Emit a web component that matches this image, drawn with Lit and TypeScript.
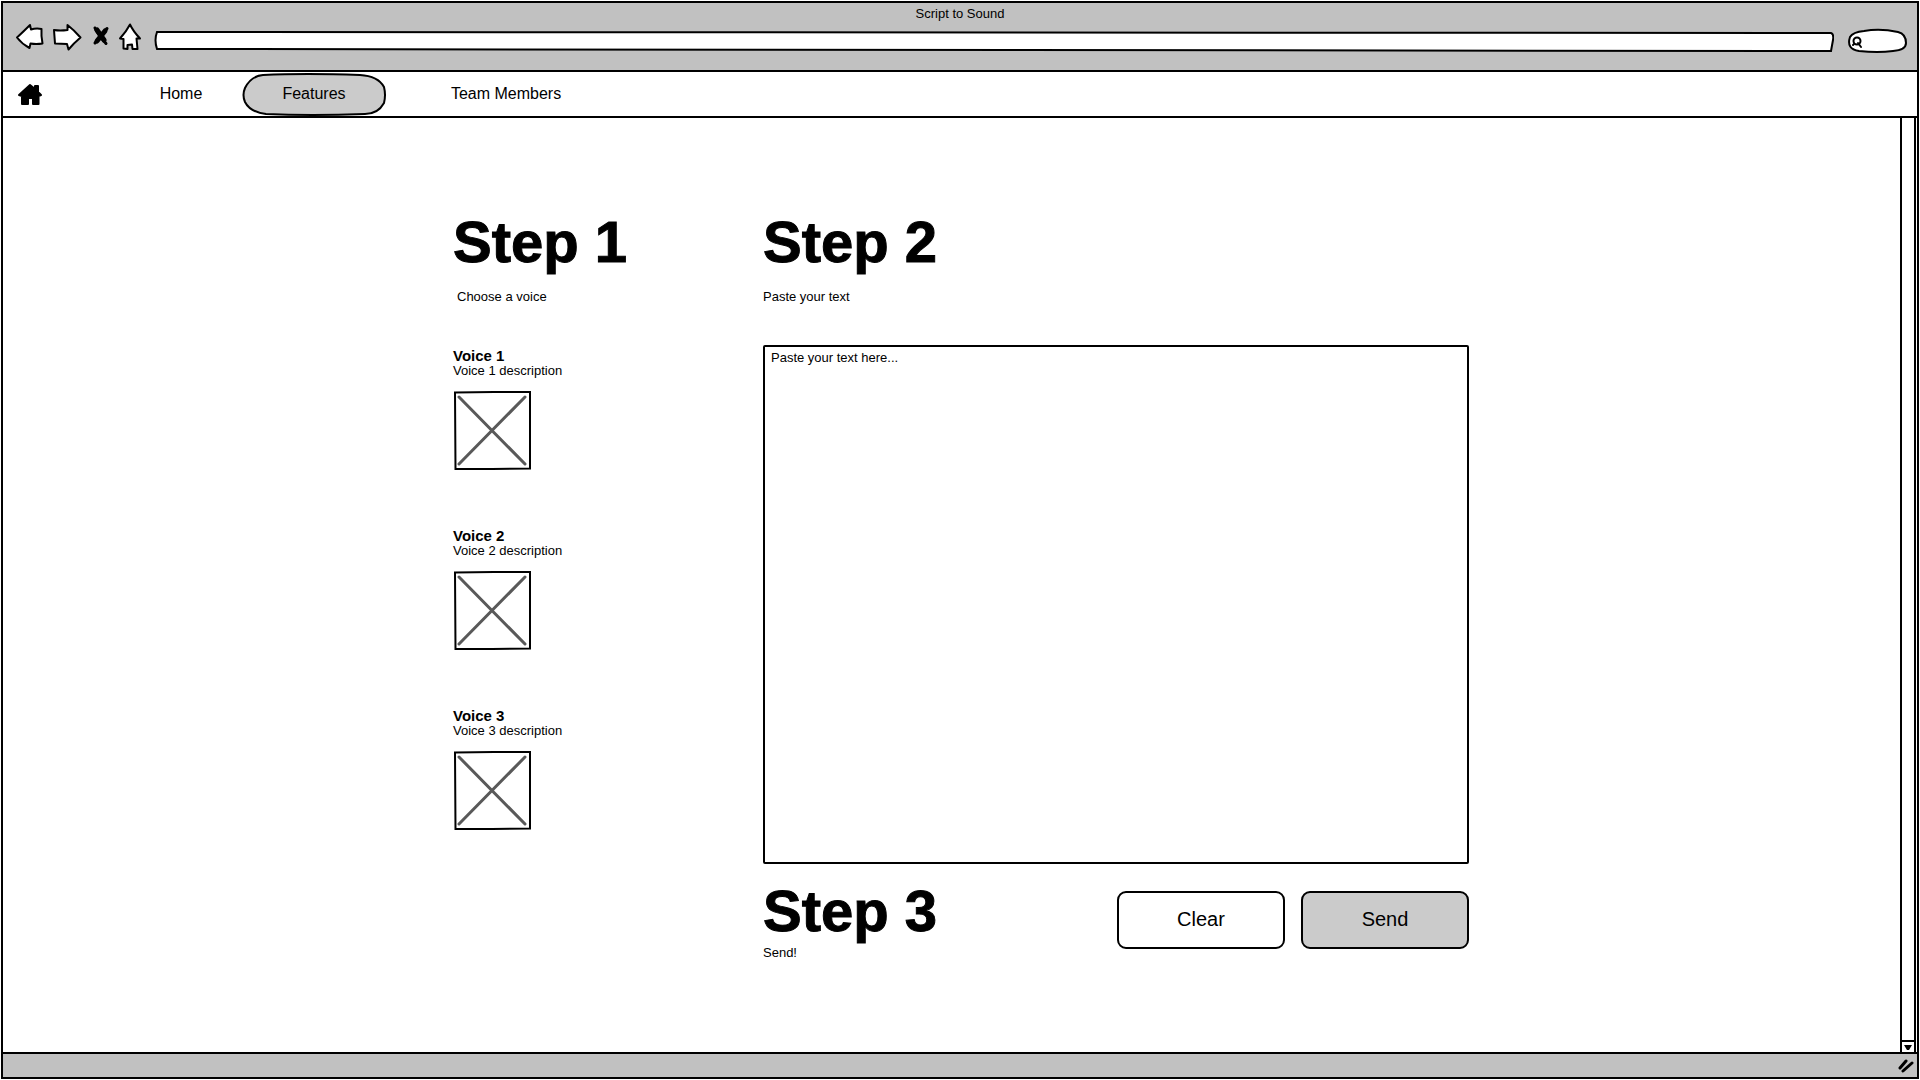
import { LitElement, html, css, svg } from "lit";
import { customElement, state } from "lit/decorators.js";

interface Voice {
  name: string;
  description: string;
}

const VOICES: Voice[] = [
  { name: "Voice 1", description: "Voice 1 description" },
  { name: "Voice 2", description: "Voice 2 description" },
  { name: "Voice 3", description: "Voice 3 description" },
];

@customElement("browser-toolbar")
export class BrowserToolbar extends LitElement {
  static styles = css`
    :host {
      display: block;
      background: #c1c1c1;
      border: 2px solid #000;
      font: 13px/16px "Liberation Sans", Arial, sans-serif;
    }
    .title {
      padding-top: 3px;
      text-align: center;
    }
    .bar {
      display: flex;
      align-items: flex-start;
      gap: 8px;
      height: 48px;
      padding: 0 8px 0 11px;
    }
    button {
      display: block;
      flex: none;
      margin: 0;
      padding: 0;
      border: 0;
      background: none;
    }
    svg {
      display: block;
    }
    .field {
      position: relative;
      display: flex;
      height: 22px;
      margin-top: 8px;
    }
    .address {
      flex: 1;
      margin-left: 4px;
    }
    .search {
      width: 62px;
      height: 26px;
      margin: 6px 0 0 5px;
    }
    .outline {
      position: absolute;
      inset: 0;
      width: 100%;
      height: 100%;
    }
    input {
      position: relative;
      flex: 1;
      min-width: 0;
      margin: 0;
      padding: 0 8px;
      border: 0;
      outline: 0;
      background: transparent;
      font: inherit;
    }
    .search input {
      padding-left: 20px;
    }
  `;

  private icon(width: number, x: number, label: string, shape: unknown) {
    return html`<button type="button" aria-label=${label}>
      <svg width=${width} height="30" viewBox="${x} 22 ${width} 30" stroke="#000" stroke-width="2"
        stroke-linejoin="round" stroke-linecap="round" fill="#fff">${shape}</svg>
    </button>`;
  }

  render() {
    return html`
      <div class="title">Script to Sound</div>
      <div class="bar">
        ${this.icon(30, 14, "Back", svg`<path d="M17 37.5 Q24 31 30 25 L31 29.5 Q36 28 41.5 29 Q41 36 42.5 43.5 Q36 44.5 30.5 43.5 L29.5 48 Q22 44 17 37.5Z"/>`)}
        ${this.icon(30, 52, "Forward", svg`<path d="M54 30 Q60 31 67.5 30 L67.5 25 Q74 30 80.5 37.5 Q74 43 68.5 49.5 L67 44 Q61 43.5 55 43.5 Q54.5 37 54 30Z"/>`)}
        ${this.icon(20, 91, "Stop", svg`<path d="M96 28 Q98 33 107 43.5 M108 28.5 Q103 35 96 43" fill="none" stroke-width="3"/><path d="M98 30 L105 40 M106 31 L98 41" stroke-width="5"/>`)}
        ${this.icon(24, 118, "Home", svg`<path d="M130 24.5 Q133 31 140 38.5 L136.5 38.5 L137.5 49 L132.5 49 L132 44.5 L127.5 45 L127.5 49 L123.5 48.5 L123.5 39 L120 38.5 Q126 32 130 24.5Z"/>`)}
        <div class="field address">
          <svg class="outline" viewBox="0 0 1678 22" preserveAspectRatio="none">
            <path d="M3 2 L1675 3 Q1678 4 1677 10 L1675 21 Q800 20 3 19 Q0 10 3 2Z" fill="#fff" stroke="#000" stroke-width="2" vector-effect="non-scaling-stroke"/>
          </svg>
          <input type="text" aria-label="Address" />
        </div>
        <div class="field search">
          <svg class="outline" viewBox="1847 28 62 26">
            <path d="M1850 37 Q1853 32 1864 31 Q1880 28 1898 32 Q1906 34 1906 43 Q1906 50 1893 51 Q1878 53 1859 51 Q1846 49 1850 37Z" fill="#fff" stroke="#000" stroke-width="2"/>
            <circle cx="1857" cy="41" r="3.5" fill="none" stroke="#000" stroke-width="2"/>
            <path d="M1854 44 L1853 45 M1858 43 L1861 47" stroke="#000" stroke-width="2" stroke-linecap="round"/>
          </svg>
          <input type="text" aria-label="Search" />
        </div>
      </div>
    `;
  }
}

@customElement("site-nav")
export class SiteNav extends LitElement {
  static styles = css`
    :host {
      display: block;
      border: solid #000;
      border-width: 0 2px 2px;
      font: 16px/44px "Liberation Sans", Arial, sans-serif;
    }
    nav {
      display: flex;
      align-items: center;
      height: 44px;
      padding-left: 14px;
    }
    a {
      color: #000;
      text-decoration: none;
    }
    svg {
      display: block;
    }
    .logo {
      width: 28px;
      margin-right: 98px;
    }
    .tab {
      position: relative;
      width: 76px;
      text-align: center;
    }
    .current {
      width: 144px;
      margin: 0 48px 0 23px;
    }
    .wide {
      width: 144px;
    }
    .pill {
      position: absolute;
      inset: 0;
      width: 100%;
      height: 100%;
    }
    .label {
      position: relative;
    }
  `;

  render() {
    return html`
      <nav>
        <a class="logo" href="#" aria-label="Start">
          <svg width="28" height="28" viewBox="17 80 28 28" stroke="#000" stroke-width="2" stroke-linejoin="round">
            <path d="M19 95 L30 85 L35 89 L35 86 L38 86 L38 92 L41 95 L38.5 96 L38.5 104 L33 104 L33 98 L28 98 L28 104 L22 104 L22 96Z"/>
          </svg>
        </a>
        <a class="tab" href="#home">Home</a>
        <a class="tab current" href="#features" aria-current="page">
          <svg class="pill" viewBox="242 72 144 44">
            <path d="M263 75 Q305 73 360 75 Q378 76 384 87 Q386 95 384 103 Q378 114 365 114 Q310 116 266 114 Q250 112 245 102 Q242 95 245 88 Q251 76 263 75Z" fill="#cbcbcb" stroke="#000" stroke-width="2"/>
          </svg>
          <span class="label">Features</span>
        </a>
        <a class="tab wide" href="#team">Team Members</a>
      </nav>
    `;
  }
}

@customElement("voice-card")
export class VoiceCard extends LitElement {
  static properties = { voice: { attribute: false } };
  declare voice: Voice;

  static styles = css`
    :host {
      display: block;
      font: 13px/16px "Liberation Sans", Arial, sans-serif;
    }
    h2 {
      margin: 0;
      font-size: 15px;
      line-height: 15px;
    }
    p {
      margin: 0 0 12px;
    }
    svg {
      display: block;
      margin-left: 1px;
    }
  `;

  render() {
    return html`
      <h2>${this.voice.name}</h2>
      <p>${this.voice.description}</p>
      <svg width="77" height="79" viewBox="0 0 77 79" role="img" aria-label=${this.voice.name} fill="none">
        <path d="M5 6 L71 73 M71 6 L5 73" stroke="#595959" stroke-width="3" stroke-linecap="round"/>
        <path d="M1 1.5 L40 1 L76 1 L76 77.5 L38 78 L1.5 78Z" stroke="#000" stroke-width="2"/>
      </svg>
    `;
  }
}

@customElement("app-root")
export class AppRoot extends LitElement {
  @state() private text = "";

  static styles = css`
    :host {
      display: flex;
      flex-direction: column;
      box-sizing: border-box;
      min-height: 100vh;
      padding: 1px;
      background: #fff;
      color: #000;
      font: 13px/16px "Liberation Sans", Arial, sans-serif;
    }
    .view {
      display: flex;
      flex: 1;
      border: solid #000;
      border-width: 0 2px;
    }
    main {
      flex: 1;
      padding: 94px 0 0 19px;
    }
    .steps {
      display: grid;
      grid-template-columns: 310px 1fr;
      max-width: 1016px;
      margin: 0 auto;
    }
    h1 {
      margin: 0 0 17px;
      font-size: 58px;
      line-height: 60px;
      -webkit-text-stroke: 1px #000;
    }
    .hint {
      display: block;
      margin: 0;
    }
    .inset {
      padding-left: 4px;
    }
    .voices {
      display: grid;
      gap: 58px;
      margin-top: 43px;
    }
    textarea {
      display: block;
      box-sizing: border-box;
      width: 100%;
      height: 519px;
      margin: 40px 0 17px;
      padding: 3px 6px;
      border: 2px solid #000;
      border-radius: 2px;
      outline: 0;
      resize: none;
      background: #fff;
      color: #000;
      font: inherit;
    }
    textarea::placeholder {
      color: #000;
      opacity: 1;
    }
    .finish {
      display: flex;
      justify-content: space-between;
      align-items: flex-start;
    }
    .finish h1 {
      margin-bottom: 4px;
    }
    .actions {
      display: flex;
      gap: 16px;
      padding-top: 10px;
    }
    .action {
      width: 168px;
      height: 58px;
      padding: 0 0 2px;
      border: 2px solid #000;
      border-radius: 9px;
      background: #fff;
      color: #000;
      font: 20px/24px "Liberation Sans", Arial, sans-serif;
    }
    .primary {
      background: #cbcbcb;
    }
    .scroll {
      display: flex;
      align-items: flex-end;
      width: 12px;
      margin-right: 1px;
      border: solid #000;
      border-width: 0 2px;
    }
    .down {
      width: 100%;
      height: 12px;
      padding: 0;
      border: 0;
      border-top: 2px solid #000;
      background: #fff;
    }
    svg {
      display: block;
    }
    .down svg {
      margin: 0 auto;
    }
    footer {
      display: flex;
      justify-content: flex-end;
      align-items: center;
      height: 23px;
      padding-right: 3px;
      border: 2px solid #000;
      background: #c1c1c1;
    }
  `;

  render() {
    return html`
      <browser-toolbar></browser-toolbar>
      <site-nav></site-nav>
      <div class="view">
        <main>
          <div class="steps">
            <section>
              <h1>Step 1</h1>
              <p class="hint inset">Choose a voice</p>
              <div class="voices">
                ${VOICES.map((voice) => html`<voice-card .voice=${voice}></voice-card>`)}
              </div>
            </section>
            <section>
              <h1>Step 2</h1>
              <label class="hint" for="script">Paste your text</label>
              <textarea
                id="script"
                placeholder="Paste your text here..."
                .value=${this.text}
                @input=${(e: Event) => (this.text = (e.target as HTMLTextAreaElement).value)}
              ></textarea>
              <div class="finish">
                <div>
                  <h1>Step 3</h1>
                  <p class="hint">Send!</p>
                </div>
                <div class="actions">
                  <button class="action" type="button" @click=${() => (this.text = "")}>Clear</button>
                  <button class="action primary" type="button">Send</button>
                </div>
              </div>
            </section>
          </div>
        </main>
        <div class="scroll">
          <button class="down" type="button" aria-label="Scroll down">
            <svg width="8" height="7" viewBox="0 0 8 7"><path d="M0 1 L8 1 L5 6 L3 6Z"/></svg>
          </button>
        </div>
      </div>
      <footer>
        <svg width="16" height="14" viewBox="0 0 16 14" stroke="#000" stroke-width="3" stroke-linecap="round">
          <path d="M2 9 L8 2 M5 12 L14 4"/>
        </svg>
      </footer>
    `;
  }
}
